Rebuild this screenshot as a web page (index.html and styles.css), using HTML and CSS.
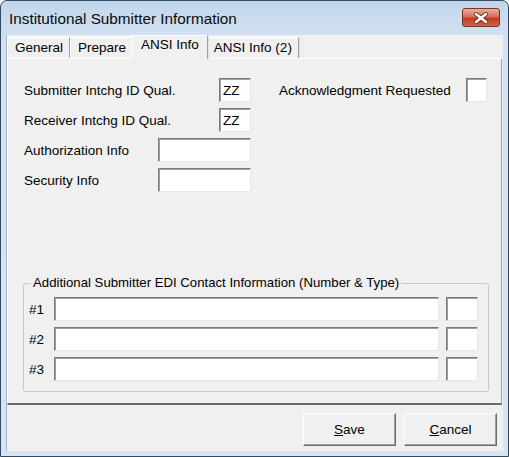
FILE: index.html
```html
<!DOCTYPE html>
<html lang="en">
<head>
    <meta charset="UTF-8">
    <title>Institutional Submitter Information</title>
    <link rel="stylesheet" href="styles.css">
</head>
<body>
    <div class="window">
        <div class="titlebar">
            <span class="title">Institutional Submitter Information</span>
            <div class="close-btn">
                <svg width="16" height="12" viewBox="0 0 16 12">
                    <path d="M3 2 L13 10 M13 2 L3 10" stroke="#6b2a1c" stroke-width="4.2" stroke-linecap="round"/>
                    <path d="M3 2 L13 10 M13 2 L3 10" stroke="#ffffff" stroke-width="2.6" stroke-linecap="round"/>
                </svg>
            </div>
        </div>

        <div class="client">
            <div class="tabs">
                <div class="tab">General</div>
                <div class="tab">Prepare</div>
                <div class="tab active">ANSI Info</div>
                <div class="tab">ANSI Info (2)</div>
            </div>

            <div class="panel">
                <div class="top-fields">
                    <div class="left-col">
                        <div class="row">
                            <label class="lbl-wide">Submitter Intchg ID Qual.</label>
                            <input type="text" class="field qual" value="ZZ">
                        </div>
                        <div class="row">
                            <label class="lbl-wide">Receiver Intchg ID Qual.</label>
                            <input type="text" class="field qual" value="ZZ">
                        </div>
                        <div class="row">
                            <label class="lbl-mid">Authorization Info</label>
                            <input type="text" class="field info">
                        </div>
                        <div class="row">
                            <label class="lbl-mid">Security Info</label>
                            <input type="text" class="field info">
                        </div>
                    </div>
                    <div class="right-col">
                        <div class="row">
                            <label class="lbl-ack">Acknowledgment Requested</label>
                            <input type="text" class="field ack">
                        </div>
                    </div>
                </div>

                <fieldset class="group">
                    <legend>Additional Submitter EDI Contact Information (Number &amp; Type)</legend>
                    <div class="contact-row">
                        <label class="num">#1</label>
                        <input type="text" class="field contact">
                        <input type="text" class="field type">
                    </div>
                    <div class="contact-row">
                        <label class="num">#2</label>
                        <input type="text" class="field contact">
                        <input type="text" class="field type">
                    </div>
                    <div class="contact-row">
                        <label class="num">#3</label>
                        <input type="text" class="field contact">
                        <input type="text" class="field type">
                    </div>
                </fieldset>
            </div>

            <div class="footer">
                <button class="btn"><u>S</u>ave</button>
                <button class="btn"><u>C</u>ancel</button>
            </div>
        </div>
    </div>
</body>
</html>
```

FILE: styles.css
```css
* {
    box-sizing: border-box;
}
body {
    margin: 0;
    font-family: "Liberation Sans", Arial, sans-serif;
    font-size: 13.5px;
    color: #000;
    background: #ffffff;
}
.window {
    width: 509px;
    height: 457px;
    border: 1px solid #34495c;
    border-radius: 7px 7px 0 0;
    background: linear-gradient(#c2d6ec, #d3e2f2 40px, #d6e4f3);
    padding: 0 5px 5px 5px;
    display: flex;
    flex-direction: column;
}
.titlebar {
    height: 34px;
    display: flex;
    align-items: center;
    padding: 0 3px 0 3px;
}
.title {
    font-size: 15.3px;
    color: #0c0c0c;
    margin-top: 1px;
}
.close-btn {
    margin-left: auto;
    margin-top: -1px;
    width: 38px;
    height: 19px;
    border: 1px solid #7a3424;
    border-radius: 3px;
    background: linear-gradient(#eab0a2, #d7705a 45%, #c23c22 55%, #d4614a);
    display: flex;
    align-items: center;
    justify-content: center;
}
.client {
    flex: 1;
    background: #f0f0f0;
    display: flex;
    flex-direction: column;
    border-left: 1px solid #a9b8c8;
}

/* tabs */
.tabs {
    display: flex;
    align-items: flex-end;
    height: 23px;
}
.tab {
    height: 21px;
    line-height: 20px;
    padding: 0 6px 0 7px;
    border-top: 1px solid #ffffff;
    border-left: 1px solid #ffffff;
    border-right: 1px solid #a0a0a0;
    box-shadow: 1px 0 0 #e0e0e0;
    background: #f0f0f0;
}
.tab.active {
    height: 24px;
    line-height: 18px;
    margin: 0 -2px -1px -2px;
    padding: 0 8px 0 9px;
    position: relative;
    z-index: 1;
}

/* panel */
.panel {
    height: 347px;
    margin-right: 1px;
    border-top: 1px solid #ffffff;
    border-left: 1px solid #ffffff;
    border-right: 1px solid #a0a0a0;
    border-bottom: 2px solid #6b6b6b;
    padding: 19px 0 0 16px;
}
.top-fields {
    display: flex;
}
.left-col {
    width: 227px;
}
.right-col {
    margin-left: 28px;
}
.row {
    display: flex;
    align-items: center;
    height: 24px;
    margin-bottom: 6px;
}
.lbl-wide {
    width: 195px;
}
.lbl-mid {
    width: 134px;
}
.lbl-ack {
    width: 187px;
}
.field {
    height: 24px;
    border: 1px solid;
    border-color: #7a7a7a #e6e6e6 #e6e6e6 #7a7a7a;
    box-shadow: inset 1px 1px 0 #a0a0a0;
    background: #ffffff;
    font-family: "Liberation Sans", Arial, sans-serif;
    font-size: 13.5px;
    padding: 1px 0 0 3px;
    margin: 0;
    outline: none;
}
.qual {
    width: 32px;
}
.info {
    width: 93px;
}
.ack {
    width: 21px;
}

/* group box */
.group {
    margin: 77px 13px 0 -1px;
    padding: 0 10px 10px 5px;
    border: 1px solid #c4c8cc;
    border-radius: 3px;
}
.group legend {
    margin-left: 2px;
    padding: 0 2px;
    line-height: 16px;
    font-size: 13.2px;
}
.contact-row {
    display: flex;
    align-items: center;
    height: 24px;
    margin-top: 6px;
}
.num {
    width: 25px;
}
.contact {
    width: 385px;
}
.type {
    width: 32px;
    margin-left: 7px;
}

/* buttons */
.footer {
    display: flex;
    justify-content: flex-end;
    gap: 8px;
    padding: 8px 6px 0 0;
}
.btn {
    width: 93px;
    height: 33px;
    font-family: "Liberation Sans", Arial, sans-serif;
    font-size: 13.5px;
    background: #f0f0f0;
    border: 1px solid;
    border-color: #ffffff #6b6b6b #6b6b6b #ffffff;
    box-shadow: inset -1px -1px 0 #a0a0a0;
    padding: 0;
    color: #000;
}
```
